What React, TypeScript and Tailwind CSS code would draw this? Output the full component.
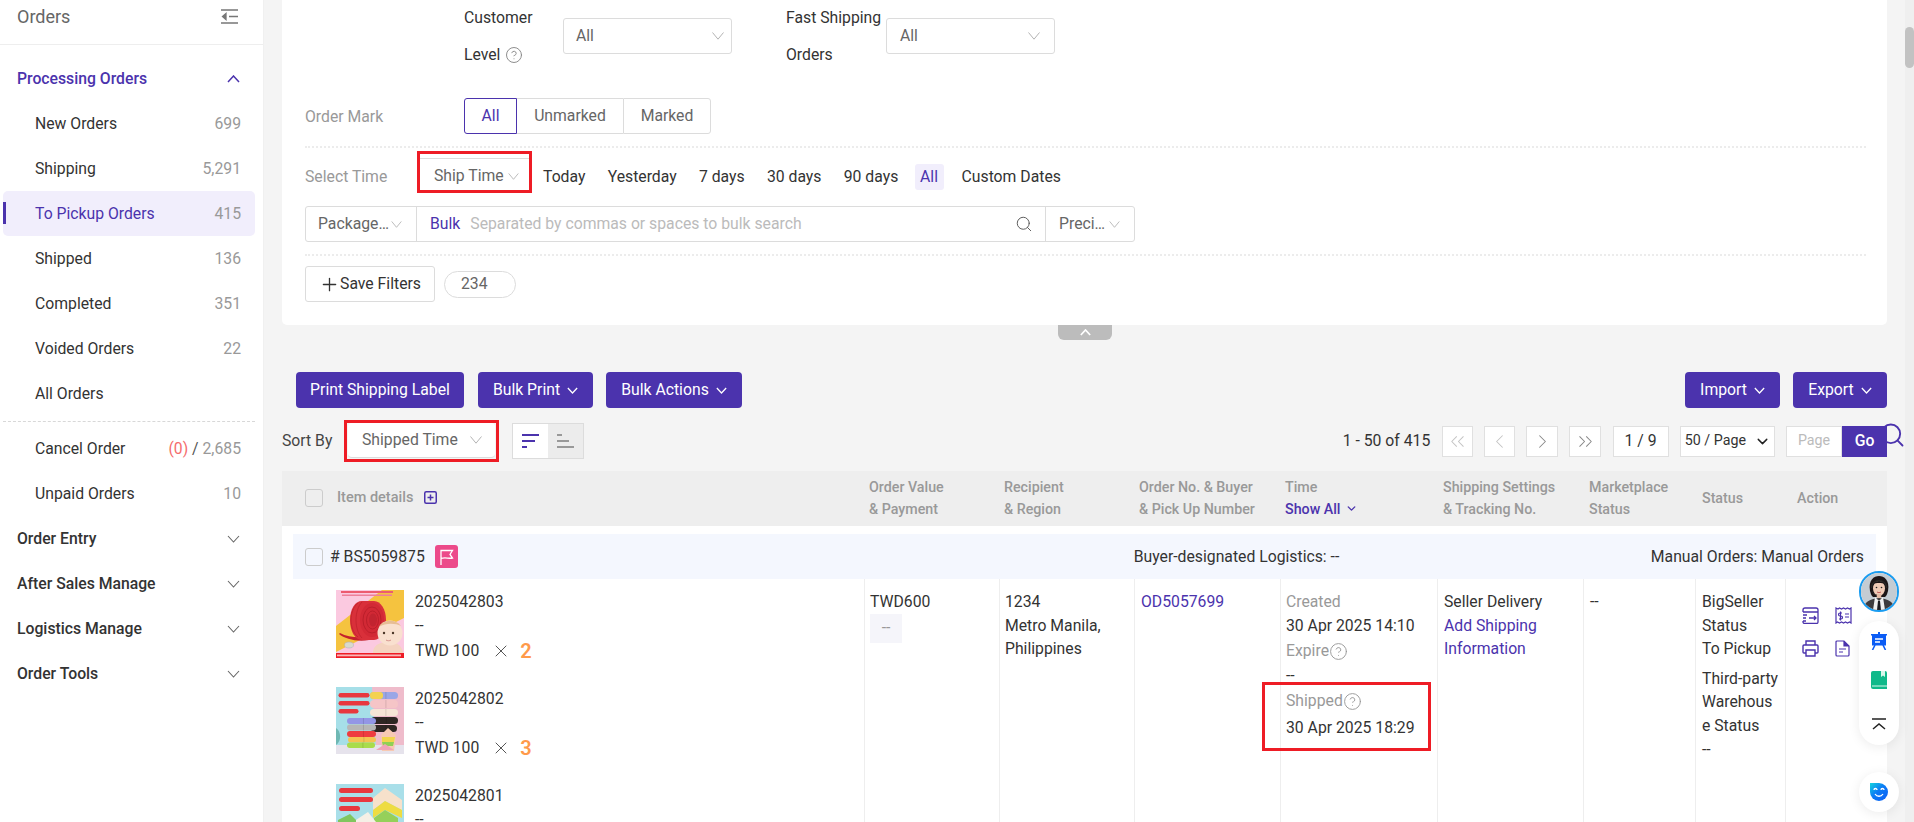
import { ChevronDown, ChevronLeft, ChevronRight, ChevronsLeft, ChevronsRight, CircleHelp, Plus, Search, X } from "lucide-react";

const menu = [
  { name: "New Orders", count: "699" },
  { name: "Shipping", count: "5,291" },
  { name: "To Pickup Orders", count: "415", active: true },
  { name: "Shipped", count: "136" },
  { name: "Completed", count: "351" },
  { name: "Voided Orders", count: "22" },
  { name: "All Orders", count: "" },
];

const sections = ["Order Entry", "After Sales Manage", "Logistics Manage", "Order Tools"];

const times = ["Today", "Yesterday", "7 days", "30 days", "90 days"];

const columns = "grid grid-cols-[582px_135px_135px_146px_157px_146px_112px_90px_102px]";

// the thin wide V used on every select
const SelectArrow = ({ className = "w-3 h-2" }: { className?: string }) => (
  <svg viewBox="0 0 12 8" className={`${className} shrink-0`} fill="none" stroke="#b4b4b4" strokeWidth="1">
    <path d="M.5.5 6 7.2 11.5.5" />
  </svg>
);

const Chevron = ({ up = false, width = 1.5, className = "h-2 w-[13px]" }: { up?: boolean; width?: number; className?: string }) => (
  <svg viewBox="0 0 13 8" className={`${className} shrink-0`} fill="none" stroke="currentColor" strokeWidth={width}>
    <path d={up ? "M1 7l5.500-6L12 7" : "M1 1l5.500 6L12 1"} />
  </svg>
);

const Select = ({ className = "" }: { className?: string }) => (
  <div className={`flex h-9 items-center justify-between rounded-[3px] border border-[#dcdcdc] bg-white text-[#666] ${className}`}>
    All
    <SelectArrow />
  </div>
);

const Checkbox = () => <span className="block h-[18px] w-[18px] shrink-0 rounded-[3px] border border-[#cccccc] bg-transparent" />;

const RollPhoto = () => (
  <svg viewBox="0 0 68 68" className="h-[68px] w-[68px] shrink-0">
    <rect width="68" height="68" fill="#fbc9e0" />
    <path d="M0 36 46 0H68V28L0 62Z" fill="#f5c33f" />
    <rect x="5" y="1" width="52" height="2" fill="#ec5b70" />
    <rect x="6" y="4.500" width="50" height="1.500" fill="#ee7f9a" />
    <path d="M3 44c6 5 18 8 30 6l-3-3c-9 1-19 0-26-4z" fill="#c4222c" />
    <path d="M26 11h12c7 0 12 9 12 19s-5 20-12 20H26c-7 0-12-9-12-20s5-19 12-19z" fill="#d9303a" />
    <path d="M22 13c-5 4-7 11-7 17s2 13 7 17M26 12c-4 4-6 11-6 18s2 14 6 18" fill="none" stroke="#bb1f2a" strokeWidth=".7" />
    <ellipse cx="36" cy="30" rx="12" ry="17" fill="#d22935" />
    <ellipse cx="36" cy="30" rx="9" ry="13" fill="none" stroke="#b01a25" strokeWidth=".7" />
    <ellipse cx="36.500" cy="30" rx="6" ry="9" fill="none" stroke="#b01a25" strokeWidth=".7" />
    <ellipse cx="37" cy="30" rx="4" ry="6.500" fill="#c22430" />
    <path d="M37 63c0-6 4-9 8-10 7-2 16-1 19 3 2 2 3 5 3 7z" fill="#f4d3c0" />
    <circle cx="54" cy="43" r="12.500" fill="#f9e0cf" />
    <path d="M43 37c3-7 16-9 22-1-6-3-16-3-22 1z" fill="#e7bd95" />
    <circle cx="48" cy="43" r="1.200" fill="#4a3527" />
    <circle cx="57" cy="43" r="1.200" fill="#4a3527" />
    <path d="M50 50c1.500 1 3.500 1 5 0" fill="none" stroke="#cc7d78" strokeWidth=".8" />
    <ellipse cx="13" cy="55" rx="4.500" ry="3" fill="#d9d9ce" stroke="#aab" strokeWidth=".5" />
    <rect y="63" width="68" height="5" fill="#ee1c25" />
    <rect x="1" y="64.500" width="64" height="1.800" fill="#f9b7b9" />
  </svg>
);

const Foam = ({ x, y, w, h, fill }: { x: number; y: number; w: number; h: number; fill: string }) => (
  <>
    <rect x={x} y={y} width={w} height={h} rx={h / 2} fill={fill} />
    <rect x={x + w * 0.55} y={y} width="1" height={h} fill="#000" opacity=".12" />
  </>
);

const StackPhoto = () => (
  <svg viewBox="0 0 68 67" className="h-[67px] w-[68px] shrink-0">
    <rect width="68" height="67" fill="#a6dfe8" />
    <path d="M36 0H68V60H40z" fill="#efbccb" />
    <rect y="58" width="68" height="9" fill="#e6e3ec" />
    <rect x="2.500" y="6" width="31" height="4.500" rx="2.200" fill="#e8383f" />
    <rect x="2.500" y="14" width="31" height="4.500" rx="2.200" fill="#e8383f" />
    <rect x="2.500" y="22" width="20" height="4.500" rx="2.200" fill="#e8383f" />
    <Foam x={34} y={5} w={28} h={7} fill="#9aa6e6" />
    <rect x="34" y="5" width="13" height="7" rx="3" fill="#f3d250" />
    <Foam x={34} y={13} w={28} h={8} fill="#f5c5c7" />
    <Foam x={34} y={22} w={28} h={7} fill="#f6e5d6" />
    <Foam x={35} y={30} w={27} h={7} fill="#2e2623" />
    <Foam x={35} y={38} w={26} h={7} fill="#2e2623" />
    <Foam x={11} y={31} w={29} h={6} fill="#9396e6" />
    <Foam x={11} y={37.500} w={29} h={6} fill="#b6b6b6" />
    <Foam x={11} y={44} w={29} h={6} fill="#ee3c40" />
    <Foam x={12} y={50} w={28} h={5.500} fill="#f5c352" />
    <Foam x={11} y={55.500} w={28} h={5.500} fill="#a9dc4c" />
    <path d="M0 41c5 3 6 13 0 17z" fill="#6fb8b4" />
    <path d="M52 41 60 48 58 64H46L45 48z" fill="#f7c9b2" />
    <path d="M46 50h13l-1 5H46z" fill="#f1d54c" />
    <path d="M46 55h12l-1 4H47z" fill="#8fd055" />
    <path d="M40 63h18l-9-6z" fill="#f0a4b8" />
  </svg>
);

const CornerPhoto = () => (
  <svg viewBox="0 0 68 68" className="h-[68px] w-[68px] shrink-0">
    <rect width="68" height="68" fill="#a9dfe9" />
    <rect x="3" y="4" width="34" height="5" rx="2.500" fill="#e8383f" />
    <rect x="3" y="13" width="34" height="5" rx="2.500" fill="#e8383f" />
    <rect x="3" y="22" width="21" height="5" rx="2.500" fill="#e8383f" />
    <path d="M49 4 66 16V26L49 17 37 26V14z" fill="#f7e1cb" />
    <path d="M49 17 66 26V34L49 26 37 34V26z" fill="#eedc42" />
    <path d="M49 26 62 34V40H38V34z" fill="#95d05a" />
    <path d="M2 36 14 30 22 38V46H2z" fill="#80c65e" />
    <path d="M20 36 32 28 40 38V46H20z" fill="#f5f0e6" />
  </svg>
);

const Avatar = () => (
  <div className="h-[41px] w-10 overflow-hidden rounded-full border-2 border-[#1a9cf0]">
    <svg viewBox="0 0 36 37" className="h-full w-full">
      <rect width="36" height="37" fill="#c4ccd3" />
      <path d="M2 37c1-8 6-11 16-12 10 1 15 4 16 12z" fill="#3d3b3d" />
      <path d="M14 24l4 4 4-4 2 13H12z" fill="#f0f0f0" />
      <path d="M17 28h2l1 9h-4z" fill="#1c1c20" />
      <path d="M9 18C7 7 13 3 18 3s11 4 9 15c-1 4-2 5-3 6H12c-1-1-2-2-3-6z" fill="#1c1517" />
      <ellipse cx="18" cy="15.500" rx="6" ry="7.500" fill="#eecab6" />
      <rect x="15.800" y="21" width="4.400" height="4" fill="#e3bba6" />
      <path d="M12 11c3-4 9-4 12 0-3-1.500-9-1.500-12 0z" fill="#1c1517" />
      <path d="M10.500 15C10 5 26 5 25.500 15" fill="none" stroke="#2a2a2a" strokeWidth="1.100" />
      <path d="M11 18c1 3 3 4 5 4" fill="none" stroke="#2a2a2a" strokeWidth=".8" />
      <circle cx="15.500" cy="14.500" r=".8" fill="#222" />
      <circle cx="20.500" cy="14.500" r=".8" fill="#222" />
      <path d="M16 19c1.200.8 2.800.8 4 0" fill="none" stroke="#b44" strokeWidth=".8" />
    </svg>
  </div>
);

const IconCard = () => (
  <svg viewBox="0 0 17 17" className="h-[17px] w-[17px]" fill="none" stroke="#4b33ad" strokeWidth="1.300">
    <path d="M1 5V3a2 2 0 0 1 2-2h11a2 2 0 0 1 2 2v2M1 5h15v10a1.500 1.500 0 0 1-1.500 1.500H2.500A1.500 1.500 0 0 1 1 15v-1" />
    <path d="M1 8h4M1 11h3M1 14h3M7 11h7M12 9l2 2-2 2" />
  </svg>
);

const IconReceipt = () => (
  <svg viewBox="0 0 17 17" className="h-[17px] w-[17px]" fill="none" stroke="#4b33ad" strokeWidth="1.200">
    <path d="M1 1l2 1 1.500-1 2 1 2-1 2 1 2-1 2 1 1.500-1v15l-1.500-1-2 1-2-1-2 1-2-1-2 1-2-1-1.500 1z" />
    <path d="M7 6H5a1 1 0 0 0 0 3h1a1 1 0 0 1 0 3H4M5.500 4.500v9M10 7h4M10 10h4" />
  </svg>
);

const IconPrinter = () => (
  <svg viewBox="0 0 17 17" className="h-[17px] w-[17px]" fill="none" stroke="#4b33ad" strokeWidth="1.400">
    <path d="M4 5V1h9v4M4 13H2a1 1 0 0 1-1-1V6a1 1 0 0 1 1-1h13a1 1 0 0 1 1 1v6a1 1 0 0 1-1 1h-2" />
    <path d="M4 10h9v6H4z" />
  </svg>
);

const IconDoc = () => (
  <svg viewBox="0 0 15 17" className="h-[17px] w-[15px]" fill="none" stroke="#4b33ad" strokeWidth="1.200">
    <path d="M9 1H2a1 1 0 0 0-1 1v13a1 1 0 0 0 1 1h11a1 1 0 0 0 1-1V6z" />
    <path d="M9 1v5h5" fill="#4b33ad" />
    <path d="M4 9h7M4 12h4" />
  </svg>
);

const Filters = () => (
  <div className="flex h-[325px] flex-col rounded-b-[5px] bg-white pl-[23px] pr-[21px]">
    <div className="flex h-[72px] pl-[159px]">
      <div className="-mt-[1px] w-[99px] leading-[37px]">
        Customer
        <br />
        <span className="inline-flex items-center gap-[5px]">
          Level <CircleHelp size={18} strokeWidth={1.25} className="text-[#888]" />
        </span>
      </div>
      <Select className="mt-[18px] w-[169px] pl-[12px] pr-[7px]" />
      <div className="-mt-[1px] ml-[54px] w-[100px] leading-[37px]">
        Fast Shipping
        <br />
        Orders
      </div>
      <Select className="mt-[18px] w-[169px] pl-[13px] pr-[14px]" />
    </div>

    <div className="mt-[26px] flex h-9 items-center">
      <span className="w-[159px] pt-[1px] text-[#999]">Order Mark</span>
      <div className="flex h-9 text-[#666]">
        <span className="z-10 flex w-[53px] items-center justify-center rounded-l-[3px] border border-[#4b33ad] text-[#4b33ad]">All</span>
        <span className="flex w-[106px] items-center justify-center border-y border-[#dcdcdc]">Unmarked</span>
        <span className="flex w-[88px] items-center justify-center rounded-r-[3px] border border-[#dcdcdc]">Marked</span>
      </div>
    </div>

    <div className="mt-[12px] border-t-2 border-dotted border-[#ececec]" />

    <div className="mt-[3px] flex h-[42px] items-center">
      <span className="w-[112px] pt-[9px] text-[#999]">Select Time</span>
      <div className="flex h-[42px] w-[115px] items-start border-[3px] border-[#ee1c25] bg-white">
        <div className="mt-1 flex h-[32px] w-full items-center border-t border-[#dcdcdc] pl-[14px] pt-[3px] text-[#666]">
          Ship Time
          <SelectArrow className="ml-[4px] h-[7px] w-[11px]" />
        </div>
      </div>
      <div className="ml-[11px] flex items-center pt-[9px] text-[#333]">
        {times.map((t) => (
          <span key={t} className="mr-[22.3px] whitespace-nowrap">
            {t}
          </span>
        ))}
        <span className="-ml-[6px] flex h-[26px] w-[29px] items-center justify-center rounded-[3px] bg-[#f1eefc] text-[#4b33ad]">All</span>
        <span className="ml-[18px] whitespace-nowrap">Custom Dates</span>
      </div>
    </div>

    <div className="mt-[13px] flex h-9 w-[830px] items-center rounded-[3px] border border-[#dcdcdc]">
      <div className="flex h-full w-[111px] items-center border-r border-[#dcdcdc] pl-[12px] text-[#666]">
        <span>Package…</span>
        <SelectArrow className="ml-[2px] h-[7px] w-[11px]" />
      </div>
      <span className="ml-[13px] text-[#4b33ad]">Bulk</span>
      <span className="ml-[10px] flex-1 whitespace-nowrap text-[#bbb]">Separated by commas or spaces to bulk search</span>
      <Search size={18} strokeWidth={1.25} className="mr-[12px] text-[#555]" />
      <div className="flex h-full w-[89px] items-center border-l border-[#dcdcdc] pl-[13px] text-[#666]">
        <span>Preci…</span>
        <SelectArrow className="ml-[4px] h-[7px] w-[11px]" />
      </div>
    </div>

    <div className="mt-[12px] border-t-2 border-dotted border-[#ececec]" />

    <div className="mt-[10px] flex items-center">
      <button className="flex h-9 w-[130px] items-center justify-center rounded-[3px] border border-[#dcdcdc] text-[#333]">
        <Plus size={21} strokeWidth={1.5} />
        Save Filters
      </button>
      <span className="ml-[9px] flex h-[27px] w-[72px] items-center rounded-full border border-[#dcdcdc] pl-[16px] text-[#666]">234</span>
    </div>
  </div>
);

const PurpleButton = ({ label, arrow = true, className = "" }: { label: string; arrow?: boolean; className?: string }) => (
  <button className={`flex h-9 items-center justify-center gap-[7px] rounded-[4px] bg-[#4b33ad] text-white ${className}`}>
    {label}
    {arrow && <Chevron className="mt-[1px] h-[7px] w-[11px]" />}
  </button>
);

const PageArrow = ({ width, dim, children }: { width: string; dim?: boolean; children: React.ReactNode }) => (
  <span className={`flex h-[31px] items-center justify-center border border-[#e0e0e0] bg-white ${width} ${dim ? "text-[#c4c4c4]" : "text-[#888]"}`}>
    {children}
  </span>
);

const Toolbar = () => (
  <>
    <div className="mt-[47px] flex">
      <PurpleButton label="Print Shipping Label" arrow={false} className="ml-[14px] w-[168px]" />
      <PurpleButton label="Bulk Print" className="ml-[14px] w-[115px]" />
      <PurpleButton label="Bulk Actions" className="ml-[13px] w-[136px]" />
      <PurpleButton label="Import" className="ml-auto w-[95px]" />
      <PurpleButton label="Export" className="ml-[13px] w-[94px]" />
    </div>

    <div className="mt-[12px] flex h-[42px] items-center">
      <span className="w-[62px] text-[#444]">Sort By</span>
      <div className="h-[42px] w-[155px] border-[3px] border-[#ee1c25] bg-[#f4f4f4] px-[1px] pb-[1px]">
        <div className="flex h-full items-center justify-between rounded-[4px] border-b border-[#dcdcdc] bg-white pl-[14px] pr-[13px] text-[#666]">
          Shipped Time
          <SelectArrow />
        </div>
      </div>
      <div className="ml-[13px] flex h-9 w-[72px] border border-[#dcdcdc]">
        <span className="flex w-[35px] items-center justify-center bg-white">
          <svg viewBox="0 0 17 14" className="h-[14px] w-[17px]" stroke="#4b33ad" strokeWidth="2">
            <path d="M0 1h17M0 7h13M0 13h5" />
          </svg>
        </span>
        <span className="flex flex-1 items-center justify-center bg-[#ececec]">
          <svg viewBox="0 0 17 14" className="h-[14px] w-[17px]" stroke="#999" strokeWidth="2">
            <path d="M0 1h5M0 7h12M0 13h17" />
          </svg>
        </span>
      </div>

      <div className="relative ml-auto flex items-center gap-[11.25px] text-[#333]">
        <span className="whitespace-nowrap">1 - 50 of 415</span>
        <PageArrow width="w-[31px]" dim>
          <ChevronsLeft size={23} strokeWidth={1.1} />
        </PageArrow>
        <PageArrow width="w-[31px]" dim>
          <ChevronLeft size={23} strokeWidth={1.1} />
        </PageArrow>
        <PageArrow width="w-[32px]">
          <ChevronRight size={23} strokeWidth={1.1} />
        </PageArrow>
        <PageArrow width="w-[32px]">
          <ChevronsRight size={23} strokeWidth={1.1} />
        </PageArrow>
        <span className="flex h-[31px] w-[56px] items-center justify-center border border-[#e0e0e0] bg-white">1 / 9</span>
        <span className="flex h-[31px] w-[95px] items-center justify-between border border-[#e0e0e0] bg-white pl-[4px] pr-[3px] text-[14.25px]">
          50 / Page
          <ChevronDown size={17} strokeWidth={2} className="text-[#222]" />
        </span>
        <div className="relative flex h-[31px] w-[101px]">
          <span className="flex w-[56px] items-center justify-center border border-[#e0e0e0] bg-white text-[14.25px] text-[#bbb]">Page</span>
          <span className="z-10 flex w-[45px] items-center justify-center bg-[#4b33ad] font-medium text-white">Go</span>
          <Search size={28} strokeWidth={1.6} className="absolute -right-[19px] -top-[5px] text-[#4b33ad]" />
        </div>
      </div>
    </div>
  </>
);

const TableHead = () => (
  <div className={`${columns} mt-[9px] h-[55px] bg-[#eeeeee] pb-[2px] text-[14.25px] font-medium leading-[22px] text-[#999]`}>
    <div className="flex items-center pl-[23px]">
      <Checkbox />
      <span className="ml-[14px] text-[14.5px]">Item details</span>
      <svg viewBox="0 0 13 13" className="ml-[11px] h-[13px] w-[13px]" fill="none" stroke="#4b33ad" strokeWidth="1.500">
        <rect x=".75" y=".75" width="11.500" height="11.500" rx="1.500" />
        <path d="M6.500 3.500v6M3.500 6.500h6" />
      </svg>
    </div>
    <div className="self-center pl-[5px]">
      Order Value
      <br />& Payment
    </div>
    <div className="self-center pl-[5px]">
      Recipient
      <br />& Region
    </div>
    <div className="self-center whitespace-nowrap pl-[5px]">
      Order No. & Buyer
      <br />& Pick Up Number
    </div>
    <div className="self-center pl-[5px]">
      Time
      <span className="flex items-center gap-[5px] text-[#4b33ad]">
        Show All <ChevronDown size={13} strokeWidth={2.5} />
      </span>
    </div>
    <div className="self-center whitespace-nowrap pl-[6px]">
      Shipping Settings
      <br />& Tracking No.
    </div>
    <div className="self-center pl-[6px]">
      Marketplace
      <br />
      Status
    </div>
    <div className="self-center pl-[7px]">Status</div>
    <div className="self-center pl-[12px]">Action</div>
  </div>
);

const Item = ({ sku, qty, photo }: { sku: string; qty?: string; photo: React.ReactNode }) => (
  <div className="flex h-[97px]">
    {photo}
    <div className="ml-[11px] leading-[24px] text-[#333]">
      <p>{sku}</p>
      <p>--</p>
      {qty && (
        <p className="mt-[1px] flex items-center whitespace-nowrap">
          TWD 100
          <X size={20} strokeWidth={1} className="ml-[12px]" />
          <span className="ml-[9px] text-[20px] font-semibold leading-[24px] text-[#ff9a4a]">{qty}</span>
        </p>
      )}
    </div>
  </div>
);

const OrderRow = () => (
  <div className="bg-white text-[#333]">
    <div className="h-2" />
    <div className="mx-[11px] flex h-[45px] items-center bg-[#f4f7fe]">
      <span className="ml-[12px] flex">
        <Checkbox />
      </span>
      <span className="ml-[7px]"># BS5059875</span>
      <span className="ml-[10px] flex h-[23px] w-[23px] items-center justify-center rounded-[3px] bg-[#ec4a8a]">
        <svg viewBox="0 0 15 16" className="h-4 w-[15px]" fill="none" stroke="#fff" strokeWidth="1.300">
          <path d="M2 16V1.500h11.500L11 5.500l2.500 3.500C9 10 7 8 2 9.500" />
        </svg>
      </span>
      <span className="ml-[676px] whitespace-nowrap">Buyer-designated Logistics: --</span>
      <span className="ml-auto mr-[12px] whitespace-nowrap">Manual Orders: Manual Orders</span>
    </div>

    <div className={`${columns} h-[260px] leading-[23.6px]`}>
      <div className="pl-[54px] pt-[11px]">
        <Item sku="2025042803" qty="2" photo={<RollPhoto />} />
        <Item sku="2025042802" qty="3" photo={<StackPhoto />} />
        <Item sku="2025042801" photo={<CornerPhoto />} />
      </div>
      <div className="border-l border-[#eeeeee] pl-[5px] pt-[11px]">
        <p>TWD600</p>
        <span className="flex h-[29px] w-[32px] items-center justify-center bg-[#f5f5fa] text-[#999]">--</span>
      </div>
      <div className="border-l border-[#eeeeee] pl-[5px] pt-[11px]">
        <p>1234</p>
        <p>Metro Manila,</p>
        <p>Philippines</p>
      </div>
      <div className="border-l border-[#eeeeee] pl-[6px] pt-[11px] text-[#4b33ad]">OD5057699</div>
      <div className="relative border-l border-[#eeeeee] pl-[5px] pt-[11px]">
        <p className="text-[#999]">Created</p>
        <p>30 Apr 2025 14:10</p>
        <p className="flex h-[28px] items-center text-[#999]">
          Expire
          <CircleHelp size={19} strokeWidth={1.2} />
        </p>
        <p className="leading-[22px]">--</p>
        <p className="flex h-[28px] items-center text-[#999]">
          Shipped
          <CircleHelp size={19} strokeWidth={1.2} />
        </p>
        <p className="mt-[1px]">30 Apr 2025 18:29</p>
        <div className="absolute left-[-19px] top-[103px] h-[69px] w-[169px] border-[3px] border-[#ee1c25]" />
      </div>
      <div className="border-l border-[#eeeeee] pl-[6px] pt-[11px]">
        <p>Seller Delivery</p>
        <p className="text-[#4b33ad]">
          Add Shipping
          <br />
          Information
        </p>
      </div>
      <div className="border-l border-[#eeeeee] pl-[6px] pt-[11px]">--</div>
      <div className="border-l border-[#eeeeee] pl-[6px] pt-[11px]">
        <p>
          BigSeller
          <br />
          Status
          <br />
          To Pickup
        </p>
        <p className="mt-[6px] w-[78px] break-words">Third-party Warehouse Status</p>
        <p>--</p>
      </div>
      <div className="border-l border-[#eeeeee] pl-[16px] pt-[28px]">
        <div className="grid grid-cols-[17px_17px] gap-x-[16px] gap-y-[16px]">
          <IconCard />
          <IconReceipt />
          <IconPrinter />
          <IconDoc />
        </div>
      </div>
    </div>
  </div>
);

const Sidebar = () => (
  <aside className="w-[264px] shrink-0 border-r border-[#f0f0f0] bg-white">
    <div className="flex h-[45px] items-center justify-between border-b border-[#eeeeee] pb-[11px] pl-[17px] pr-[25px] text-[18px] text-[#666]">
      Orders
      <svg viewBox="0 0 17 15" className="h-[15px] w-[17px]" fill="none" stroke="#777" strokeWidth="1.300">
        <path d="M0 1h17M8 7.500h9M0 14h17" />
        <path d="M5 4.500 1.500 7.500 5 10.500z" fill="#777" />
      </svg>
    </div>

    <div className="mt-[11px] flex h-[45px] items-center justify-between pl-[17px] pr-[23px] font-medium text-[#4b33ad]">
      Processing Orders
      <Chevron up />
    </div>

    {menu.map((m) => (
      <div
        key={m.name}
        className={`relative mx-[3px] flex h-[45px] w-[252px] items-center justify-between rounded-[5px] pl-[32px] pr-[14px] ${m.active ? "bg-[#f1eefc] text-[#4b33ad]" : "text-[#333]"}`}
      >
        {m.active && <span className="absolute left-0 top-[11px] h-[22px] w-[3px] bg-[#4b33ad]" />}
        {m.name}
        <span className="text-[#999]">{m.count}</span>
      </div>
    ))}

    <div className="mx-[3px] mt-[5px] w-[252px] border-t border-dashed border-[#d8d8d8]" />

    <div className="mx-[3px] mt-[4px] flex h-[45px] w-[252px] items-center justify-between pl-[32px] pr-[14px] text-[#333]">
      Cancel Order
      <span className="text-[#999]">
        <span className="text-[#f56c6c]">(0)</span> <span className="text-[#555]">/</span> 2,685
      </span>
    </div>
    <div className="mx-[3px] flex h-[45px] w-[252px] items-center justify-between pl-[32px] pr-[14px] text-[#333]">
      Unpaid Orders
      <span className="text-[#999]">10</span>
    </div>

    {sections.map((s) => (
      <div key={s} className="flex h-[45px] items-center justify-between pl-[17px] pr-[23px] font-medium text-[#333]">
        {s}
        <Chevron width={1.1} className="h-2 w-[13px] text-[#666]" />
      </div>
    ))}
  </aside>
);

const FloatingTools = () => (
  <div className="absolute left-[1859px] top-[571px] flex w-10 flex-col">
    <Avatar />
    <div className="mt-[9px] flex h-[124px] flex-col items-center rounded-full bg-white pt-[11px] shadow-[0_2px_12px_rgba(0,0,0,0.08)]">
      <svg viewBox="0 0 18 18" className="h-[18px] w-[18px]">
        <path d="M8 0h2v2h7v1.500H1V2h7zM2 3.500h14v10H2z" fill="#0b5cf5" />
        <path d="M5 7h8M5 10h5" stroke="#fff" strokeWidth="1.300" />
        <path d="M5 13 2.500 18M13 13l2.500 5" stroke="#0b5cf5" strokeWidth="1.600" />
      </svg>
      <svg viewBox="0 0 16 18" className="mt-[21px] h-[18px] w-4">
        <path d="M2 0h12a2 2 0 0 1 2 2v16H2a2 2 0 0 1-2-2V2a2 2 0 0 1 2-2z" fill="#10b98a" />
        <path d="M10 0h4v6l-2-1.500L10 6z" fill="#d9f7ec" />
        <path d="M1 15h15" stroke="#d9f7ec" strokeWidth="1" />
      </svg>
      <svg viewBox="0 0 14 12" className="mt-[29px] h-[12px] w-[14px]" fill="none" stroke="#222" strokeWidth="1.500">
        <path d="M0 1h14M1 11l6-5 6 5" />
      </svg>
    </div>
    <div className="mt-[27px] flex h-10 items-center justify-center rounded-full bg-white shadow-[0_2px_12px_rgba(0,0,0,0.08)]">
      <svg viewBox="0 0 18 18" className="h-[18px] w-[18px]">
        <defs>
          <linearGradient id="smile" x1="0" y1="0" x2="1" y2="1">
            <stop offset="0" stopColor="#12d4de" />
            <stop offset=".45" stopColor="#0b7cf5" />
            <stop offset="1" stopColor="#0b5cf5" />
          </linearGradient>
        </defs>
        <path d="M0 0h9a9 9 0 0 1 0 18A9 9 0 0 1 0 9z" fill="url(#smile)" />
        <path d="M4 7a1.500 1.500 0 0 1 3 0M11 7a1.500 1.500 0 0 1 3 0M5 11c2 3 6 3 8 0" fill="none" stroke="#fff" strokeWidth="1.300" />
      </svg>
    </div>
  </div>
);

export default function App() {
  return (
    <div className="relative flex h-[822px] w-[1914px] overflow-hidden bg-[#f4f4f4] font-['Roboto',sans-serif] text-[15.75px] text-[#333]">
      <Sidebar />
      <main className="ml-[18px] w-[1605px] shrink-0">
        <div className="relative">
          <Filters />
          <span className="absolute bottom-[-15px] left-[776px] flex h-[15px] w-[54px] items-start justify-center rounded-b-[6px] bg-[#bcbcbc] pt-[4px] text-white">
            <Chevron up width={2} className="h-[7px] w-[11px]" />
          </span>
        </div>
        <Toolbar />
        <TableHead />
        <OrderRow />
      </main>
      <div className="ml-auto w-[9px] bg-[#efefef] pt-[27px]">
        <div className="h-[41px] rounded-full bg-[#c2c2c2]" />
      </div>
      <FloatingTools />
    </div>
  );
}
